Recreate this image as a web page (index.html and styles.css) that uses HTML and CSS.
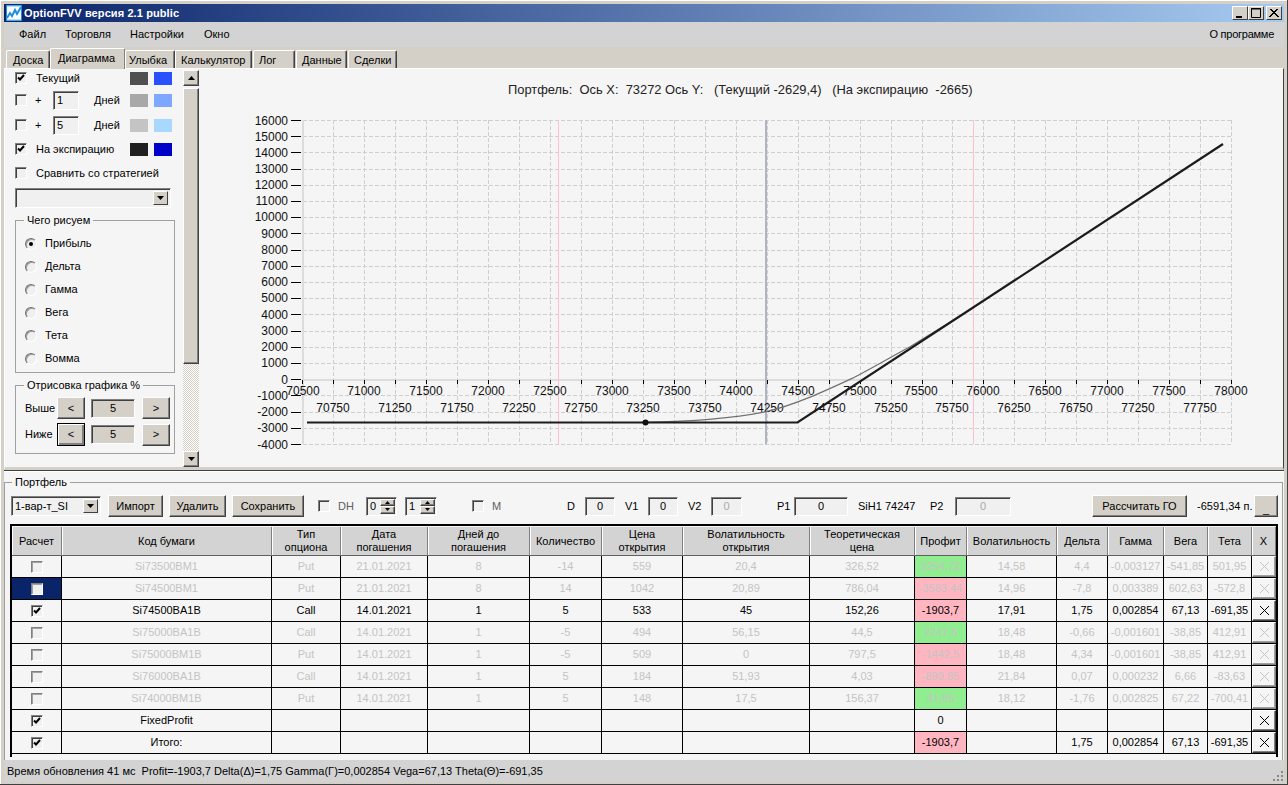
FILE: index.html
```html
<!DOCTYPE html>
<html lang="ru">
<head>
<meta charset="utf-8">
<title>OptionFVV</title>
<link rel="stylesheet" href="styles.css">
</head>
<body>
<svg class="defs" width="0" height="0">
  <symbol id="tick" viewBox="0 0 10 10"><path d="M2 4.500l2 2 4-4.500" fill="none" stroke="#000" stroke-width="2"/></symbol>
  <symbol id="x" viewBox="0 0 11 11"><path d="M1 1l9 9M10 1l-9 9" stroke="currentColor" fill="none"/></symbol>
  <symbol id="up" viewBox="0 0 7 4"><path d="M3.500 0 7 4H0z" fill="#000"/></symbol>
  <symbol id="down" viewBox="0 0 7 4"><path d="M0 0h7L3.500 4z" fill="#000"/></symbol>
</svg>
<div class="window">
  <header class="titlebar">
    <svg class="appicon" viewBox="0 0 16 16"><rect width="16" height="16" fill="#1c8fe0"/><rect x="1" y="1" width="14" height="14" fill="#fff"/><path d="M1 13 4 8l2 3 3-6 2 4 4-7" fill="none" stroke="#1c8fe0" stroke-width="2"/><path d="M1 1h14M1 15h14" stroke="#6fc0f0"/></svg>
    <span class="apptitle">OptionFVV версия 2.1 public</span>
    <span class="capbtns">
      <span class="cap"><svg viewBox="0 0 14 12"><path d="M3 9h6v2H3z" fill="#000"/></svg></span>
      <span class="cap"><svg viewBox="0 0 14 12"><path d="M2.500 1.500h9v9h-9zM2 2h10" fill="none" stroke="#000"/></svg></span>
      <span class="cap cap-close"><svg viewBox="0 0 14 12"><path d="M3 2l8 8M11 2l-8 8M4 2l8 8M10 2l-8 8" fill="none" stroke="#000"/></svg></span>
    </span>
  </header>
  <nav class="menubar">
    <span class="m1">Файл</span><span class="m2">Торговля</span><span class="m3">Настройки</span><span class="m4">Окно</span>
    <span class="about">О программе</span>
  </nav>
  <div class="tabs">
    <span class="tab t1">Доска</span>
    <span class="tab t2 active">Диаграмма</span>
    <span class="tab t3">Улыбка</span>
    <span class="tab t4">Калькулятор</span>
    <span class="tab t5">Лог</span>
    <span class="tab t6">Данные</span>
    <span class="tab t7">Сделки</span>
  </div>
  <section class="upper">
    <aside class="side">
      <div class="opt r1"><span class="chk"><svg><use href="#tick"/></svg></span><span class="wide">Текущий</span><i class="sw c1"></i><i class="sw c2"></i></div>
      <div class="opt r2"><span class="chk"></span><span>+</span><span class="field f26">1</span><span>Дней</span><i class="sw c3"></i><i class="sw c4"></i></div>
      <div class="opt r3"><span class="chk"></span><span>+</span><span class="field f26">5</span><span>Дней</span><i class="sw c5"></i><i class="sw c6"></i></div>
      <div class="opt r3"><span class="chk"><svg><use href="#tick"/></svg></span><span class="wide">На экспирацию</span><i class="sw c7"></i><i class="sw c8"></i></div>
      <div class="opt r3"><span class="chk"></span><span class="wide long">Сравнить со стратегией</span></div>
      <div class="combo combo-side"><span class="combo-text"></span><span class="combo-btn"><svg><use href="#down"/></svg></span></div>
      <fieldset class="group g1">
        <legend>Чего рисуем</legend>
        <div class="radio"><i class="rd on"></i>Прибыль</div>
        <div class="radio"><i class="rd"></i>Дельта</div>
        <div class="radio"><i class="rd"></i>Гамма</div>
        <div class="radio"><i class="rd"></i>Вега</div>
        <div class="radio"><i class="rd"></i>Тета</div>
        <div class="radio"><i class="rd"></i>Вомма</div>
      </fieldset>
      <fieldset class="group g2">
        <legend>Отрисовка графика %</legend>
        <div class="stepper"><span>Выше</span><span class="btn sb">&lt;</span><span class="valbox">5</span><span class="btn sb">&gt;</span></div>
        <div class="stepper s2"><span>Ниже</span><span class="btn sb focus">&lt;</span><span class="valbox">5</span><span class="btn sb">&gt;</span></div>
      </fieldset>
    </aside>
    <div class="scroll">
      <span class="btn sbtn"><svg><use href="#up"/></svg></span>
      <span class="btn thumb"></span>
      <span class="track"></span>
      <span class="btn sbtn"><svg><use href="#down"/></svg></span>
    </div>
    <svg class="chart" viewBox="200 69 1083 398" width="1083" height="398">
      <text class="ttl" x="508" y="94" xml:space="preserve">Портфель:  Ось X:  73272 Ось Y:   (Текущий -2629,4)   (На экспирацию  -2665)</text>
      <path class="grid" d="M303 136.500H1231M303 152.500H1231M303 169.500H1231M303 185.500H1231M303 201.500H1231M303 217.500H1231M303 233.500H1231M303 250.500H1231M303 266.500H1231M303 282.500H1231M303 298.500H1231M303 314.500H1231M303 331.500H1231M303 347.500H1231M303 363.500H1231M303 395.500H1231M303 412.500H1231M303 428.500H1231M303 444.500H1231M303 120.500H1231"/>
      <path class="grid" d="M333.500 120V444M364.500 120V444M395.500 120V444M426.500 120V444M457.500 120V444M488.500 120V444M519.500 120V444M550.500 120V444M581.500 120V444M612.500 120V444M643.500 120V444M674.500 120V444M705.500 120V444M736.500 120V444M767.500 120V444M798.500 120V444M829.500 120V444M860.500 120V444M891.500 120V444M922.500 120V444M952.500 120V444M983.500 120V444M1014.500 120V444M1045.500 120V444M1076.500 120V444M1107.500 120V444M1138.500 120V444M1169.500 120V444M1200.500 120V444M1231.500 120V444"/>
      <path class="axis" d="M303 120V444M303 379.500H1231"/>
      <path class="ticks" d="M291 120.500H301M291 136.500H301M291 152.500H301M291 169.500H301M291 185.500H301M291 201.500H301M291 217.500H301M291 233.500H301M291 250.500H301M291 266.500H301M291 282.500H301M291 298.500H301M291 314.500H301M291 331.500H301M291 347.500H301M291 363.500H301M291 379.500H301M291 395.500H301M291 412.500H301M291 428.500H301M291 444.500H301"/>
      <path class="ticks" d="M302.500 380v4M333.500 380v4M364.500 380v4M395.500 380v4M426.500 380v4M457.500 380v4M488.500 380v4M519.500 380v4M550.500 380v4M581.500 380v4M612.500 380v4M643.500 380v4M674.500 380v4M705.500 380v4M736.500 380v4M767.500 380v4M798.500 380v4M829.500 380v4M860.500 380v4M891.500 380v4M922.500 380v4M952.500 380v4M983.500 380v4M1014.500 380v4M1045.500 380v4M1076.500 380v4M1107.500 380v4M1138.500 380v4M1169.500 380v4M1200.500 380v4M1231.500 380v4"/>
      <path class="pink" d="M558.500 120V444M973.500 120V444"/>
      <path class="blue" d="M766 120V444"/>
      <g class="yl">
        <text x="288" y="124.500">16000</text><text x="288" y="140.500">15000</text><text x="288" y="156.500">14000</text><text x="288" y="173">13000</text><text x="288" y="189">12000</text><text x="288" y="205">11000</text><text x="288" y="221">10000</text><text x="288" y="238">9000</text><text x="288" y="254">8000</text><text x="288" y="270">7000</text><text x="288" y="286">6000</text><text x="288" y="302">5000</text><text x="288" y="319">4000</text><text x="288" y="335">3000</text><text x="288" y="351">2000</text><text x="288" y="367">1000</text><text x="288" y="384">0</text><text x="288" y="400">-1000</text><text x="288" y="416">-2000</text><text x="288" y="432">-3000</text><text x="288" y="449">-4000</text>
      </g>
      <g class="xl">
        <text x="303" y="395">70500</text><text x="364" y="395">71000</text><text x="426" y="395">71500</text><text x="488" y="395">72000</text><text x="550" y="395">72500</text><text x="612" y="395">73000</text><text x="674" y="395">73500</text><text x="736" y="395">74000</text><text x="798" y="395">74500</text><text x="860" y="395">75000</text><text x="921" y="395">75500</text><text x="983" y="395">76000</text><text x="1045" y="395">76500</text><text x="1107" y="395">77000</text><text x="1169" y="395">77500</text><text x="1231" y="395">78000</text>
        <text x="333" y="412">70750</text><text x="395" y="412">71250</text><text x="457" y="412">71750</text><text x="519" y="412">72250</text><text x="581" y="412">72750</text><text x="643" y="412">73250</text><text x="705" y="412">73750</text><text x="767" y="412">74250</text><text x="829" y="412">74750</text><text x="891" y="412">75250</text><text x="952" y="412">75750</text><text x="1014" y="412">76250</text><text x="1076" y="412">76750</text><text x="1138" y="412">77250</text><text x="1200" y="412">77750</text>
      </g>
      <path class="cur" d="M645 422.300C690 421.500 735 418 766 411.700C795 405 825 391 853 378C872 368 891 357 910 346.700L973 308"/>
      <path class="exp" d="M307 422.500H797.500L1223 144"/>
      <circle cx="645.500" cy="422.500" r="3" fill="#111"/>
    </svg>
  </section>
  <section class="lower">
    <fieldset class="group pf">
      <legend>Портфель</legend>
      <div class="toolbar">
        <div class="combo combo-pf"><span class="combo-text">1-вар-т_SI</span><span class="combo-btn"><svg><use href="#down"/></svg></span></div>
        <span class="btn tb w55">Импорт</span>
        <span class="btn tb w57">Удалить</span>
        <span class="btn tb w72">Сохранить</span>
        <span class="chk"></span>
        <span class="dim">DH</span>
        <span class="spin w31"><span class="spin-val">0</span><span class="spin-btns"><span class="btn"><svg><use href="#up"/></svg></span><span class="btn"><svg><use href="#down"/></svg></span></span></span>
        <span class="spin w32"><span class="spin-val">1</span><span class="spin-btns"><span class="btn"><svg><use href="#up"/></svg></span><span class="btn"><svg><use href="#down"/></svg></span></span></span>
        <span class="chk"></span>
        <span class="dim">M</span>
        <span>D</span>
        <span class="field w30">0</span>
        <span>V1</span>
        <span class="field w30">0</span>
        <span>V2</span>
        <span class="field w31 ghost">0</span>
        <span>P1</span>
        <span class="field w54">0</span>
        <span>SiH1 74247</span>
        <span>P2</span>
        <span class="field w56 ghost">0</span>
        <span class="btn tb w95">Рассчитать ГО</span>
        <span>-6591,34 п.</span>
        <span class="btn tb w24 us">_</span>
      </div>
      <div class="gridwrap">
        <table class="tbl">
          <colgroup><col class="c50"><col class="c210"><col class="c69"><col class="c87"><col class="c102"><col class="c72"><col class="c81"><col class="c127"><col class="c105"><col class="c52"><col class="c90"><col class="c51"><col class="c56"><col class="c44"><col class="c44"><col class="c24"></colgroup>
          <thead><tr><th>Расчет</th><th>Код бумаги</th><th>Тип<br>опциона</th><th>Дата<br>погашения</th><th>Дней до<br>погашения</th><th>Количество</th><th>Цена<br>открытия</th><th>Волатильность<br>открытия</th><th>Теоретическая<br>цена</th><th>Профит</th><th>Волатильность</th><th>Дельта</th><th>Гамма</th><th>Вега</th><th>Тета</th><th>X</th></tr></thead>
          <tbody>
            <tr class="off"><td><span class="chk"></span></td><td>Si73500BM1</td><td>Put</td><td>21.01.2021</td><td>8</td><td>-14</td><td>559</td><td>20,4</td><td>326,52</td><td class="gain">3254,72</td><td>14,58</td><td>4,4</td><td>-0,003127</td><td>-541,85</td><td>501,95</td><td class="xc"><span class="xb"><svg><use href="#x"/></svg></span></td></tr>
            <tr class="off"><td class="sel"><span class="chk"></span></td><td>Si74500BM1</td><td>Put</td><td>21.01.2021</td><td>8</td><td>14</td><td>1042</td><td>20,89</td><td>786,04</td><td class="loss">-3583,44</td><td>14,96</td><td>-7,8</td><td>0,003389</td><td>602,63</td><td>-572,8</td><td class="xc"><span class="xb"><svg><use href="#x"/></svg></span></td></tr>
            <tr><td><span class="chk"><svg><use href="#tick"/></svg></span></td><td>Si74500BA1B</td><td>Call</td><td>14.01.2021</td><td>1</td><td>5</td><td>533</td><td>45</td><td>152,26</td><td class="loss">-1903,7</td><td>17,91</td><td>1,75</td><td>0,002854</td><td>67,13</td><td>-691,35</td><td class="xc"><span class="xb"><svg><use href="#x"/></svg></span></td></tr>
            <tr class="off"><td><span class="chk"></span></td><td>Si75000BA1B</td><td>Call</td><td>14.01.2021</td><td>1</td><td>-5</td><td>494</td><td>56,15</td><td>44,5</td><td class="gain">2247,5</td><td>18,48</td><td>-0,66</td><td>-0,001601</td><td>-38,85</td><td>412,91</td><td class="xc"><span class="xb"><svg><use href="#x"/></svg></span></td></tr>
            <tr class="off"><td><span class="chk"></span></td><td>Si75000BM1B</td><td>Put</td><td>14.01.2021</td><td>1</td><td>-5</td><td>509</td><td>0</td><td>797,5</td><td class="loss">-1442,5</td><td>18,48</td><td>4,34</td><td>-0,001601</td><td>-38,85</td><td>412,91</td><td class="xc"><span class="xb"><svg><use href="#x"/></svg></span></td></tr>
            <tr class="off"><td><span class="chk"></span></td><td>Si76000BA1B</td><td>Call</td><td>14.01.2021</td><td>1</td><td>5</td><td>184</td><td>51,93</td><td>4,03</td><td class="loss">-899,85</td><td>21,84</td><td>0,07</td><td>0,000232</td><td>6,66</td><td>-83,63</td><td class="xc"><span class="xb"><svg><use href="#x"/></svg></span></td></tr>
            <tr class="off"><td><span class="chk"></span></td><td>Si74000BM1B</td><td>Put</td><td>14.01.2021</td><td>1</td><td>5</td><td>148</td><td>17,5</td><td>156,37</td><td class="gain">41,85</td><td>18,12</td><td>-1,76</td><td>0,002825</td><td>67,22</td><td>-700,41</td><td class="xc"><span class="xb"><svg><use href="#x"/></svg></span></td></tr>
            <tr><td><span class="chk"><svg><use href="#tick"/></svg></span></td><td>FixedProfit</td><td></td><td></td><td></td><td></td><td></td><td></td><td></td><td>0</td><td></td><td></td><td></td><td></td><td></td><td class="xc"><span class="xb"><svg><use href="#x"/></svg></span></td></tr>
            <tr><td><span class="chk"><svg><use href="#tick"/></svg></span></td><td>Итого:</td><td></td><td></td><td></td><td></td><td></td><td></td><td></td><td class="loss">-1903,7</td><td></td><td>1,75</td><td>0,002854</td><td>67,13</td><td>-691,35</td><td class="xc"><span class="xb"><svg><use href="#x"/></svg></span></td></tr>
          </tbody>
        </table>
      </div>
    </fieldset>
  </section>
  <footer class="status">
    <span>Время обновления 41 мс  Profit=-1903,7 Delta(Δ)=1,75 Gamma(Γ)=0,002854 Vega=67,13 Theta(Θ)=-691,35</span>
    <svg class="grip" viewBox="0 0 11 11" width="11" height="11"><path d="M9 1h2v2H9zM5 5h2v2H5zM9 5h2v2H9zM1 9h2v2H1zM5 9h2v2H5zM9 9h2v2H9z" fill="#888"/></svg>
  </footer>
</div>
</body>
</html>
```
FILE: styles.css
```css
* { box-sizing: border-box; }
html, body { margin: 0; padding: 0; }
body { width: 1288px; height: 785px; overflow: hidden; background: #d4d0c8; font: 11px/13px "Liberation Sans", Arial, sans-serif; color: #000; }
.defs { position: absolute; }
.window { width: 1288px; height: 785px; padding: 4px 4px 3px; display: flex; flex-direction: column; background: #d4d0c8; border-bottom: 0; box-shadow: inset -1px -1px #404040, inset 1px 1px #fff; }

/* title */
.titlebar { height: 18px; flex: none; display: flex; align-items: center; padding-left: 2px; background: linear-gradient(90deg, #0a246a, #a6caf0); color: #fff; }
.appicon { width: 16px; height: 16px; flex: none; }
.apptitle { margin-left: 2px; font-weight: bold; font-size: 11px; letter-spacing: .1px; color: #fff; }
.capbtns { margin-left: auto; display: flex; padding-right: 2px; }
.cap { width: 16px; height: 14px; background: #d4d0c8; border: 1px solid; border-color: #fff #404040 #404040 #fff; display: block; }
.cap svg { display: block; width: 14px; height: 12px; }
.cap-close { margin-left: 2px; }

/* menu */
.menubar { height: 25px; flex: none; display: flex; align-items: center; background: #d3d3d3; }
.m1 { margin-left: 15px; }
.m2 { margin-left: 19px; }
.m3 { margin-left: 19px; }
.m4 { margin-left: 20px; }
.about { margin-left: auto; margin-right: 10px; letter-spacing: -.25px; }

/* tabs */
.tabs { height: 21px; flex: none; display: flex; align-items: flex-end; padding-left: 2px; }
.tab { height: 18px; padding-top: 3px; border: 1px solid; border-color: #fff #404040 transparent #fff; border-bottom: 0; border-radius: 2px 2px 0 0; background: #d4d0c8; box-shadow: inset -1px 0 #808080; white-space: nowrap; }
.tab.active { height: 21px; padding-top: 3px; border-right-color: #808080; box-shadow: none; position: relative; top: 1px; }
.t1 { width: 44px; padding-left: 6px; }
.t2 { width: 75px; padding-left: 7px; }
.t3 { width: 50px; padding-left: 3px; }
.t4 { width: 77px; padding-left: 5px; }
.t5 { width: 42px; margin-left: 1px; padding-left: 5px; }
.t6 { width: 51px; margin-left: 1px; padding-left: 5px; }
.t7 { width: 49px; margin-left: 1px; padding-left: 5px; }

/* upper panel */
.upper { height: 402px; flex: none; display: flex; background: #f5f5f5; border-top: 1px solid #fff; border-left: 1px solid #fff; border-right: 1px solid #404040; border-bottom: 3px solid #d4d0c8; box-shadow: 0 1px #404040; overflow: hidden; }
.side { width: 178px; flex: none; padding-left: 10px; }
.opt { display: grid; grid-template-columns: 20px 18px 41px 36px 24px 18px; align-items: center; }
.r1 { height: 18px; }
.r2 { height: 26px; }
.r3 { height: 24px; }
.wide { grid-column: 2 / 5; padding-left: 1px; white-space: nowrap; }
.long { grid-column: 2 / 7; }
.sw { display: block; width: 18px; height: 13px; }
.c1 { background: #505050; grid-column: 5; }
.c2 { background: #2850ff; grid-column: 6; }
.c3 { background: #a8a8a8; }
.c4 { background: #7ea8ff; }
.c5 { background: #c4c4c4; }
.c6 { background: #a8d8ff; }
.c7 { background: #202020; grid-column: 5; }
.c8 { background: #0000c8; grid-column: 6; }
.chk { width: 12px; height: 12px; display: inline-block; border: 1px solid; border-color: #808080 #fff #fff #808080; background: #f0f0f0; box-shadow: inset 1px 1px #404040; vertical-align: middle; position: relative; }
.chk svg { display: block; width: 10px; height: 10px; }
.field { display: block; height: 19px; padding: 2px 0 0 3px; background: #f0f0f0; border: 1px solid; border-color: #808080 #fff #fff #808080; box-shadow: inset 1px 1px #404040; }
.f26 { width: 26px; }
.combo { display: flex; background: #f0f0f0; border: 1px solid; border-color: #808080 #fff #fff #808080; box-shadow: inset 1px 1px #404040; padding: 2px; }
.combo-side { width: 156px; height: 20px; margin-top: 3px; }
.combo-pf { width: 90px; height: 20px; margin-left: 0; }
.combo-text { flex: 1; padding-left: 1px; line-height: 15px; }
.combo-btn { width: 15px; background: #d4d0c8; border: 1px solid; border-color: #fff #404040 #404040 #fff; display: flex; align-items: center; justify-content: center; }
.combo-btn svg { width: 7px; height: 4px; }

/* group boxes */
.group { margin: 0; padding: 0; border: 1px solid #a0a0a0; min-width: 0; }
.group legend { padding: 0 3px; margin-left: -1px; line-height: 13px; }
.g1 { width: 160px; height: 159px; margin-top: 6px; padding: 5px 0 0 9px; }
.radio { height: 23px; display: flex; align-items: center; }
.rd { width: 12px; height: 12px; border-radius: 50%; margin-right: 8px; background: #f0f0f0; border: 1px solid; border-color: #707070 #fff #fff #707070; box-shadow: inset 1px 1px #a0a0a0; display: flex; align-items: center; justify-content: center; }
.rd.on::after { content: ""; width: 4px; height: 4px; border-radius: 50%; background: #000; }
.g2 { width: 160px; height: 75px; margin-top: 6px; padding: 5px 0 0 9px; }
.stepper { display: grid; grid-template-columns: 32px 34px 51px 28px; align-items: center; height: 22px; }
.s2 { height: 23px; margin-top: 4px; }
.btn { background: #d4d0c8; border: 1px solid; border-color: #fff #404040 #404040 #fff; box-shadow: inset -1px -1px #808080; display: flex; align-items: center; justify-content: center; }
.sb { width: 28px; height: 22px; }
.focus { height: 23px; border: 1px solid #000; box-shadow: inset 1px 1px #fff, inset -2px -2px #808080; }
.valbox { width: 44px; height: 19px; line-height: 17px; text-align: center; background: #d4d0c8; border: 1px solid; border-color: #808080 #fff #fff #808080; box-shadow: inset 1px 1px #404040; }

/* scrollbar */
.scroll { width: 16px; padding-top: 1px; flex: none; display: flex; flex-direction: column; height: 398px; }
.sbtn { width: 16px; height: 16px; flex: none; }
.sbtn svg { width: 7px; height: 4px; }
.thumb { width: 16px; height: 276px; margin-top: 2px; flex: none; }
.track { flex: 1; background: repeating-conic-gradient(#d4d0c8 0 25%, #fff 0 50%) 0 0 / 2px 2px; }

/* chart */
.chart { flex: none; margin-left: 1px; display: block; }
.chart text { font-family: "Liberation Sans", Arial, sans-serif; font-size: 12px; fill: #111; }
.chart .ttl { font-size: 12.900px; fill: #222; white-space: pre; }
.yl text { text-anchor: end; }
.xl text { text-anchor: middle; }
.grid { stroke: #cfcfcf; stroke-dasharray: 4 2; fill: none; shape-rendering: crispEdges; }
.axis { stroke: #dcdcdc; stroke-width: 2; fill: none; shape-rendering: crispEdges; }
.ticks { stroke: #000; fill: none; shape-rendering: crispEdges; }
.pink { stroke: #ffc0cb; fill: none; shape-rendering: crispEdges; }
.blue { stroke: #aeb4c2; stroke-width: 2; fill: none; shape-rendering: crispEdges; }
.cur { stroke: #707070; fill: none; stroke-width: 1.200; }
.exp { stroke: #1c1c1c; fill: none; stroke-width: 2.200; }

/* lower panel */
.lower { height: 289px; flex: none; margin-top: 1px; padding-top: 4px; background: #f5f5f5; border-top: 1px solid #fff; }
.pf { width: 1279px; height: 284px; padding: 5px 0 0 5px; border-bottom: 0; }
.group.pf legend { margin-left: 2px; }
.toolbar { height: 24px; padding-left: 1px; display: grid; grid-template-columns: 97px 61px 63px 86px 20px 28px 39px 67px 20px 75px 18px 40px 23px 40px 23px 66px 17px 64px 72px 25px 137px 105px 57px 24px; align-items: center; justify-items: start; white-space: nowrap; }
.tb { height: 22px; }
.w24 { width: 24px; }
.w30 { width: 30px; }
.w31 { width: 31px; }
.w32 { width: 32px; }
.w54 { width: 54px; }
.w55 { width: 55px; }
.w56 { width: 56px; }
.w57 { width: 57px; }
.w72 { width: 72px; }
.w95 { width: 95px; }
.us { align-items: flex-end; }
.toolbar .field { text-align: center; padding-left: 0; }
.ghost { color: #a8a8a8; }
.dim { color: #606060; }
.spin { height: 19px; display: flex; background: #f0f0f0; border: 1px solid; border-color: #808080 #fff #fff #808080; box-shadow: inset 1px 1px #404040; padding: 1px 1px 1px 3px; }
.spin-val { flex: 1; line-height: 15px; }
.spin-btns { width: 15px; display: flex; flex-direction: column; }
.spin-btns .btn { flex: 1; }
.spin-btns svg { width: 5px; height: 3px; }

/* table */
.gridwrap { width: 1268px; height: 233px; margin-top: 6px; padding-top: 1px; border: solid #000; border-width: 2px 2px 0; }
.tbl { width: 1264px; table-layout: fixed; border-collapse: separate; border-spacing: 0; }
.c50 { width: 50px; }
.c210 { width: 210px; }
.c69 { width: 69px; }
.c87 { width: 87px; }
.c102 { width: 102px; }
.c72 { width: 72px; }
.c81 { width: 81px; }
.c127 { width: 127px; }
.c105 { width: 105px; }
.c52 { width: 52px; }
.c90 { width: 90px; }
.c51 { width: 51px; }
.c56 { width: 56px; }
.c44 { width: 44px; }
.c24 { width: 24px; }
.tbl th { height: 29px; padding: 0; font-weight: normal; line-height: 13px; background: #d3d3d3; border-right: 1px solid #808080; border-bottom: 1px solid #606060; box-shadow: inset 1px 0 #fff; }
.tbl td { height: 22px; padding: 0; text-align: center; border-right: 1px solid #000; border-bottom: 1px solid #000; white-space: nowrap; overflow: hidden; }
.tbl td.xc { border-right: 0; padding: 0; }
.off td { color: #c4c4c4; }
.tbl .sel { background: #0a246a; }
.tbl .gain { background: #90ee90; }
.tbl .loss { background: #ffb6c1; }
.off .chk { box-shadow: inset 1px 1px #a0a0a0; }
.xb { display: flex; align-items: center; justify-content: center; width: 24px; height: 21px; border: 1px solid; border-color: #fff #404040 #404040 #fff; box-shadow: inset -1px -1px #808080; background: #f5f5f5; }
.xb svg { width: 11px; height: 11px; color: #000; }
.off .xb { border-color: #fff #808080 #808080 #fff; box-shadow: inset -1px -1px #a0a0a0; }
.off .xb svg { color: #c4c4c4; }

/* status */
.status { height: 22px; flex: none; display: flex; align-items: center; justify-content: space-between; padding: 0 1px 0 3px; background: #d3d3d3; white-space: pre; }
.grip { align-self: flex-end; margin-bottom: 1px; }
```
